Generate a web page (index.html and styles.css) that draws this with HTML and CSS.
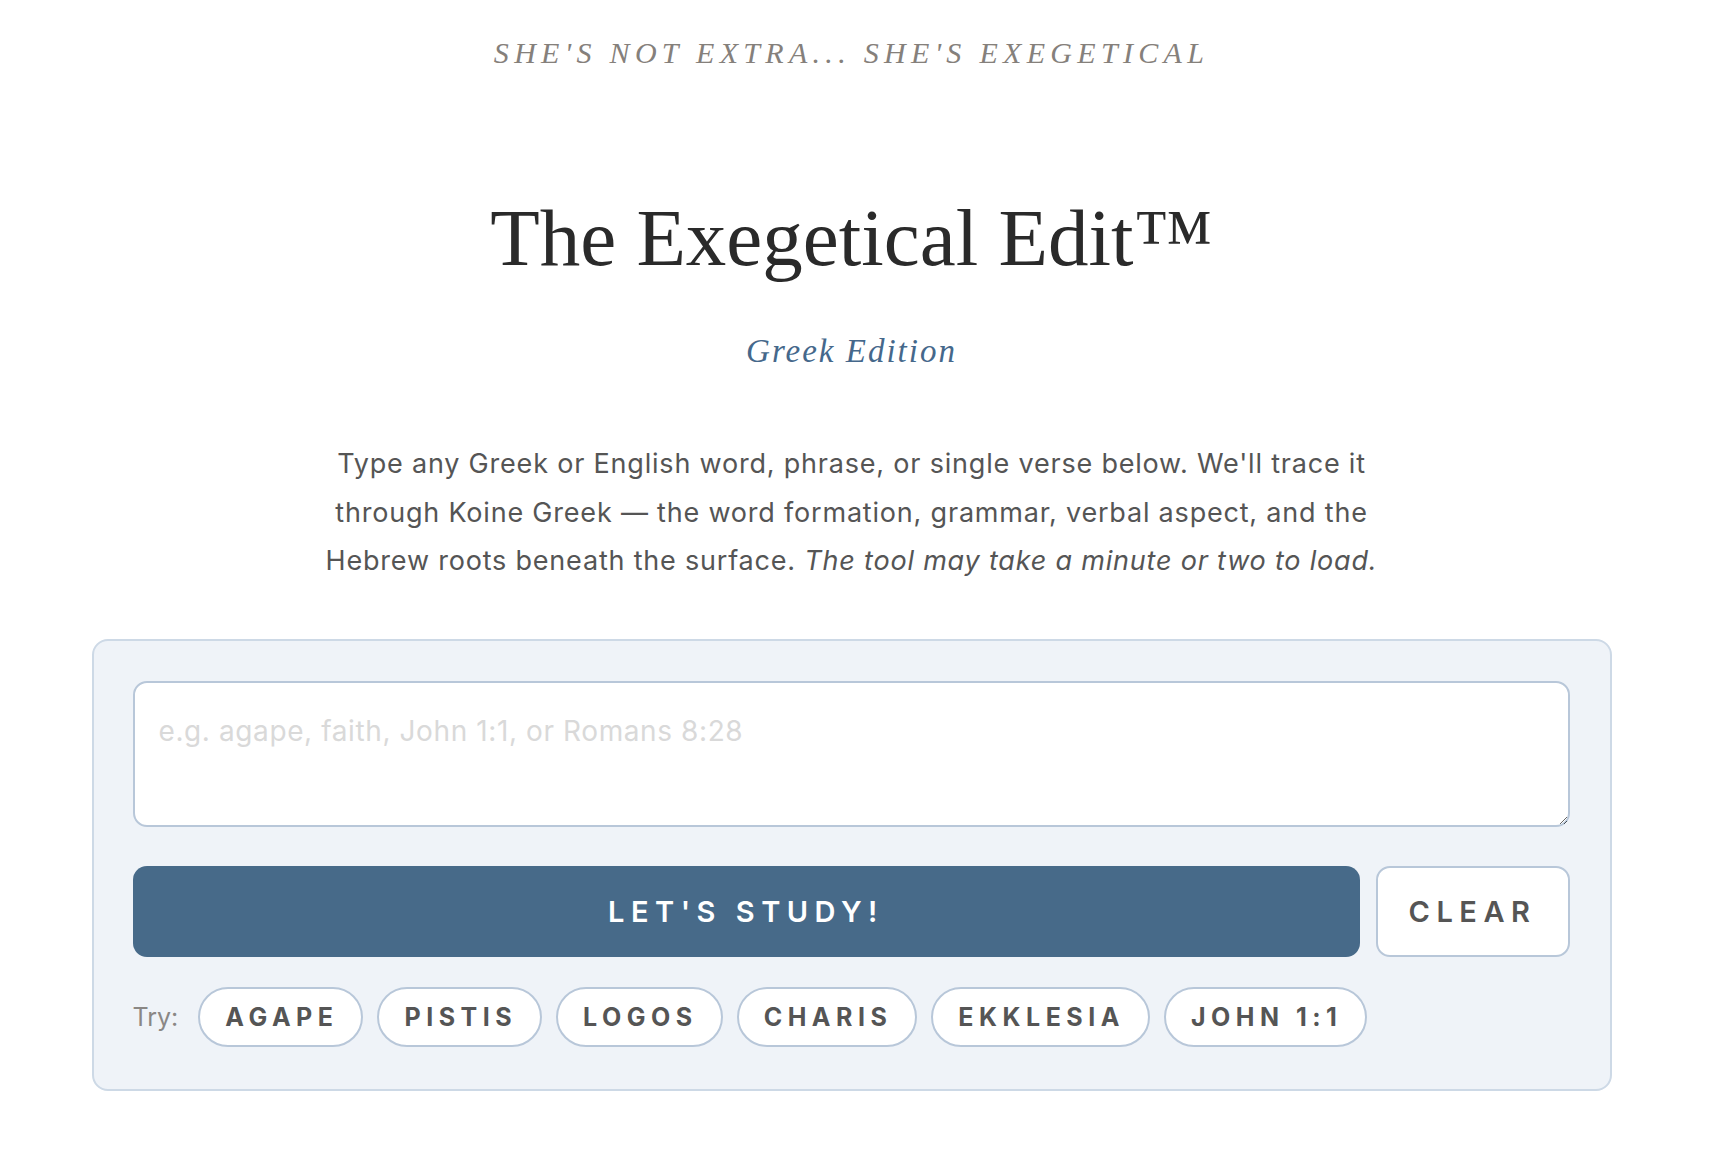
FILE: index.html
```html
<!DOCTYPE html>
<html lang="en">
<head>
<meta charset="utf-8">
<title>The Exegetical Edit™ — Greek Edition</title>
<link rel="stylesheet" href="styles.css">
</head>
<body>
<main class="page">
  <p class="tagline">She's not extra... she's exegetical</p>
  <h1 class="title">The Exegetical Edit™</h1>
  <p class="edition">Greek Edition</p>
  <p class="intro">Type any Greek or English word, phrase, or single verse below. We'll trace it through Koine Greek — the word formation, grammar, verbal aspect, and the Hebrew roots beneath the surface. <em>The tool may take a minute or two to load.</em></p>

  <section class="study-box">
    <textarea class="query" placeholder="e.g. agape, faith, John 1:1, or Romans 8:28"></textarea>
    <div class="actions">
      <button class="btn btn-primary" type="button">Let's Study!</button>
      <button class="btn btn-clear" type="button">Clear</button>
    </div>
    <div class="suggestions">
      <span class="try-label">Try:</span>
      <button class="chip" type="button">agape</button>
      <button class="chip" type="button">pistis</button>
      <button class="chip" type="button">logos</button>
      <button class="chip" type="button">charis</button>
      <button class="chip" type="button">ekklesia</button>
      <button class="chip" type="button">John 1:1</button>
    </div>
  </section>
</main>
</body>
</html>
```

FILE: styles.css
```css
* {
  box-sizing: border-box;
}

html, body {
  background: #ffffff;
}

body {
  margin: 0;
  padding: 0 15px 0 0;
  font-family: Inter, "Noto Sans", "Liberation Sans", sans-serif;
  color: #555555;
}

.page {
  max-width: 1520px;
  margin: 0 auto;
  padding-top: 33px;
  text-align: center;
}

.tagline {
  margin: 0;
  font-family: "Liberation Serif", "DejaVu Serif", serif;
  font-style: italic;
  font-size: 30px;
  line-height: 40px;
  letter-spacing: 5.3px;
  text-transform: uppercase;
  color: #85807b;
}

.title {
  margin: 115px 0 0;
  font-family: "Liberation Serif", "DejaVu Serif", serif;
  font-weight: normal;
  font-size: 81px;
  line-height: 100px;
  color: #2a2a2a;
}

.edition {
  margin: 41px 0 0;
  font-family: "Liberation Serif", "DejaVu Serif", serif;
  font-style: italic;
  font-size: 33px;
  line-height: 44px;
  letter-spacing: 2px;
  color: #45688b;
}

.intro {
  max-width: 1080px;
  margin: 67px auto 0;
  font-size: 27px;
  line-height: 48.5px;
  letter-spacing: 0.8px;
  color: #555555;
}

.intro em {
  font-style: italic;
}

.study-box {
  margin-top: 53px;
  padding: 40px 40px 42px 39px;
  background: #eff3f8;
  border: 2px solid #cdd9e6;
  border-radius: 16px;
  text-align: left;
}

.query {
  display: block;
  width: 100%;
  height: 146px;
  padding: 27px 24px;
  border: 2px solid #b8c7d9;
  border-radius: 14px;
  background: #ffffff;
  font-family: Inter, "Noto Sans", sans-serif;
  font-size: 28px;
  line-height: 1.5;
  letter-spacing: 0.6px;
  color: #333333;
  resize: vertical;
  outline: none;
}

.query::placeholder {
  color: #d9d9d9;
}

.actions {
  display: flex;
  gap: 16px;
  margin-top: 39px;
}

.btn {
  height: 91px;
  border-radius: 14px;
  font-family: Inter, "Noto Sans", sans-serif;
  font-size: 29px;
  font-weight: 600;
  letter-spacing: 6.5px;
  text-transform: uppercase;
  cursor: pointer;
}

.btn-primary {
  flex: 1;
  border: none;
  background: #476a89;
  color: #ffffff;
}

.btn-clear {
  width: 194px;
  border: 2px solid #b8c7d9;
  background: #ffffff;
  color: #555555;
}

.suggestions {
  display: flex;
  align-items: center;
  gap: 14px;
  margin-top: 30px;
}

.try-label {
  margin-right: 6px;
  font-size: 25px;
  color: #8a8785;
}

.chip {
  height: 60px;
  padding: 0 23px 0 25px;
  border: 2px solid #b8c7d9;
  border-radius: 30px;
  background: #ffffff;
  font-family: Inter, "Noto Sans", sans-serif;
  font-size: 25px;
  font-weight: 700;
  letter-spacing: 5.5px;
  text-transform: uppercase;
  color: #555555;
  cursor: pointer;
}
```
